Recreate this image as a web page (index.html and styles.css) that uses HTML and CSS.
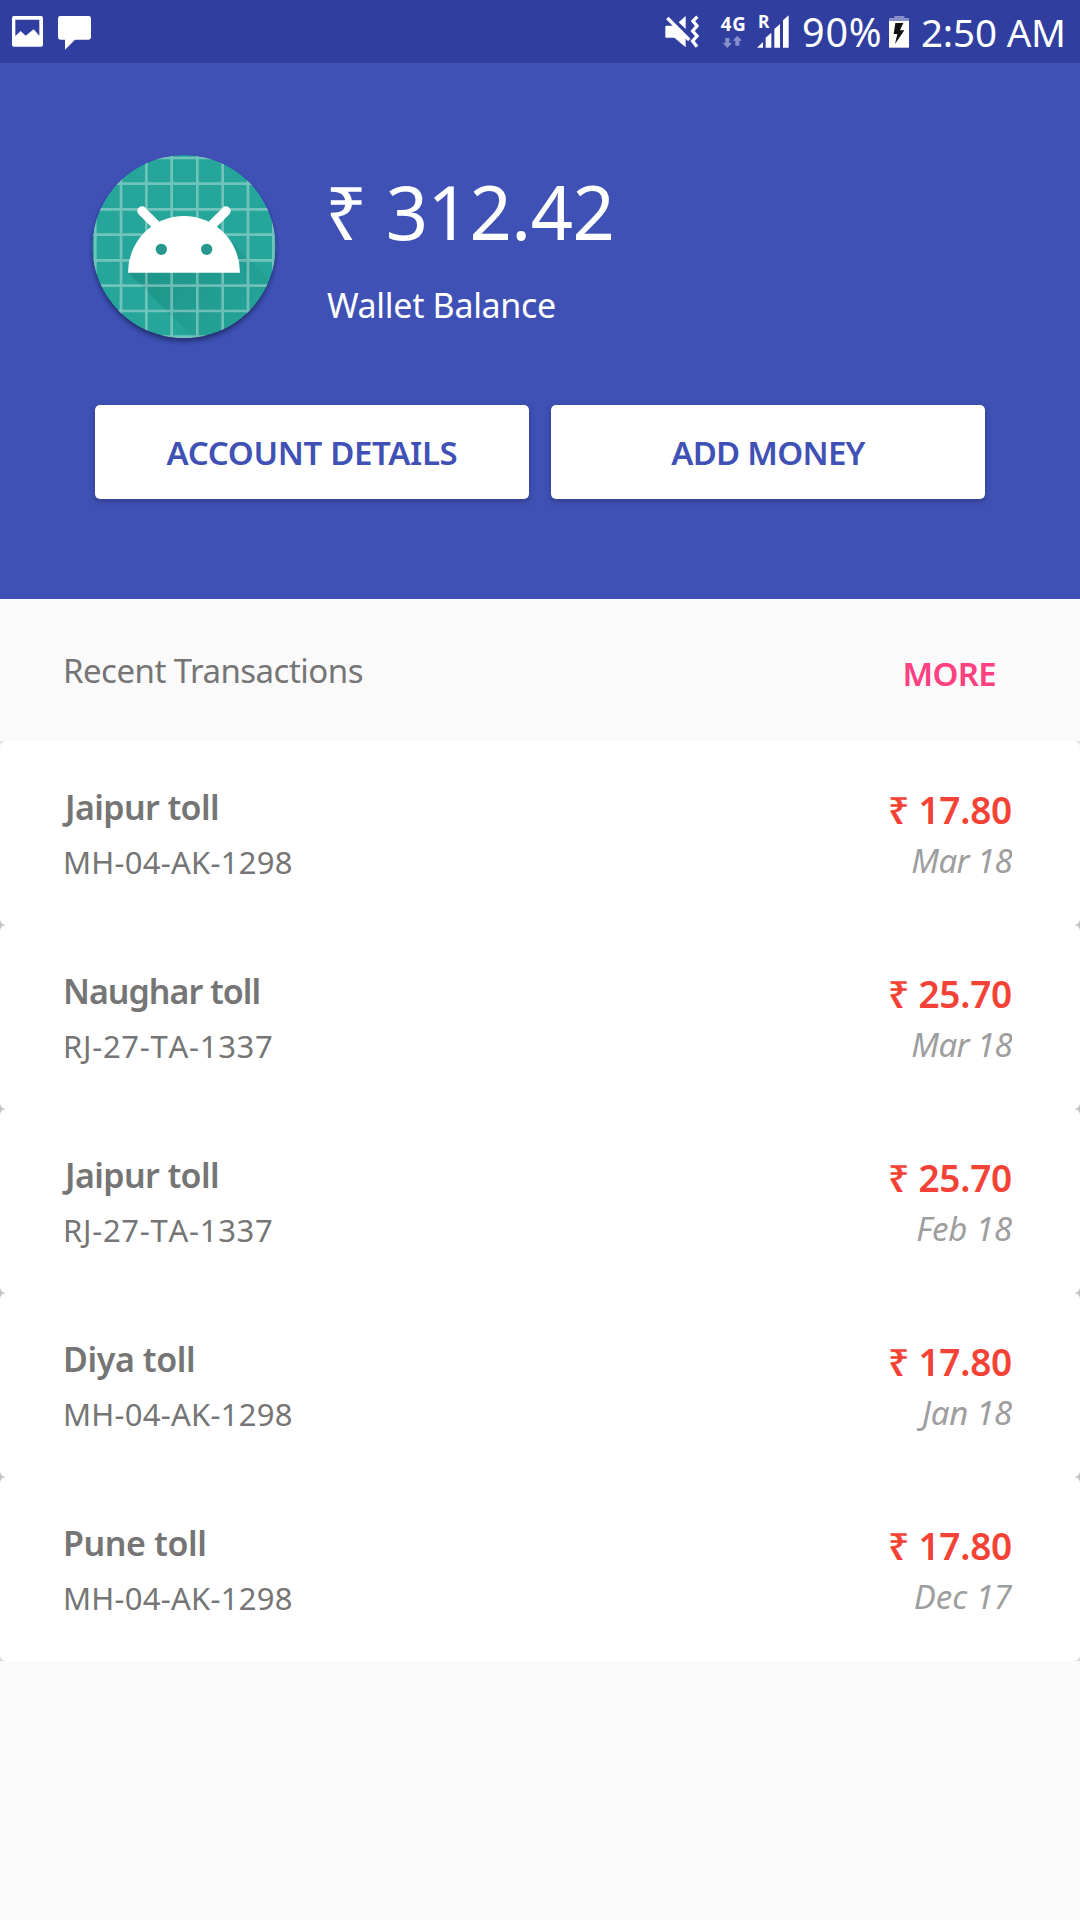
FILE: index.html
```html
<!DOCTYPE html>
<html lang="en">
<head>
<meta charset="utf-8">
<title>Wallet</title>
<link rel="stylesheet" href="styles.css">
</head>
<body>
<header class="status">
  <svg class="status-left" viewBox="0 0 300 189" aria-hidden="true">
    <path fill="#fff" fill-rule="evenodd" d="M42 48H123Q129 48 129 54V134Q129 140 123 140H42Q36 140 36 134V54Q36 48 42 48ZM46 59V108L62 93L77 107L101 88L118 107V59Z"/>
    <path fill="#fff" d="M181 48H266Q273 48 273 55V112Q273 119 266 119H225L195 149V119H181Q174 119 174 112V55Q174 48 181 48Z"/>
  </svg>
  <div class="status-right">
    <svg class="status-signal" viewBox="60 0 405 189">
      <g fill="#fff">
        <path d="M79 77H101L137 113V142L103 113H79Q76 113 76 110V80Q76 77 79 77Z"/>
        <path d="M116 67L137 48V87Z"/>
        <path d="M82 54L148 120" fill="none" stroke="#fff" stroke-width="10"/>
        <path d="M172 50L159 63L171 78L158 93L171 108L158 123L171 140" fill="none" stroke="#fff" stroke-width="10"/>
        <path d="M351 143L369 126V143ZM377 143V113L394 98V143ZM403 143V87L420 72V143ZM429 143V61L446 46V143Z"/>
      </g>
      <g fill="#8890cb">
        <path d="M256 114H268V129H276L262 144L248 129H256Z"/>
        <path d="M286 137V122H278L292 107L306 122H298V137Z"/>
      </g>
      <text class="net" x="242" y="94" textLength="75">4G</text>
      <text class="roam" x="354" y="85">R</text>
    </svg>
    <span class="percent">90%</span>
    <svg class="battery" viewBox="327 0 60 189" aria-hidden="true">
      <path fill="#8890cb" d="M343 48H373V54H387V63H327V54H343Z"/>
      <path fill="#fff" d="M327 63H387V143H327Z"/>
      <path fill="#111" d="M346 69H370L360 91H373L345 132L352 102H341Z"/>
    </svg>
    <span class="clock">2:50 AM</span>
  </div>
</header>

<section class="hero">
  <div class="wallet">
    <svg class="logo" viewBox="0 0 630 630" aria-hidden="true">
      <defs>
        <clipPath id="disc"><circle cx="312" cy="320" r="275"/></clipPath>
        <linearGradient id="shade" gradientUnits="userSpaceOnUse" x1="250" y1="330" x2="480" y2="590">
          <stop offset="0" stop-color="#00574b" stop-opacity=".22"/>
          <stop offset="1" stop-color="#00574b" stop-opacity=".03"/>
        </linearGradient>
        <filter id="soft" x="-10%" y="-10%" width="120%" height="120%"><feGaussianBlur stdDeviation="6"/></filter>
      </defs>
      <circle cx="312" cy="330" r="275" fill="#1d2560" fill-opacity=".75" filter="url(#soft)"/>
      <g clip-path="url(#disc)">
        <circle cx="312" cy="320" r="275" fill="#26a69a"/>
        <path fill="url(#shade)" d="M145 398L400 655H700V560L413 261Z"/>
        <path fill="none" stroke="#fff" stroke-opacity=".34" stroke-width="8" d="M46 0V630M123 0V630M199 0V630M275 0V630M352 0V630M428 0V630M504 0V630M580 0V630M0 54H630M0 131H630M0 208H630M0 284H630M0 361H630M0 437H630M0 513H630M0 590H630"/>
      </g>
      <path fill="#fff" d="M144 398A168 170 0 0 1 480 398Z"/>
      <path fill="none" stroke="#fff" stroke-width="28" stroke-linecap="round" d="M186 213L235 262M438 213L389 262"/>
      <circle cx="244" cy="328" r="17" fill="#26998e"/>
      <circle cx="380" cy="328" r="17" fill="#26998e"/>
    </svg>
    <div class="balance">
      <div class="amount">₹ 312.42</div>
      <div class="caption">Wallet Balance</div>
    </div>
  </div>
  <div class="actions">
    <button class="btn">ACCOUNT DETAILS</button>
    <button class="btn btn-add">ADD MONEY</button>
  </div>
</section>

<main>
  <div class="heading">
    <h2 class="title">Recent Transactions</h2>
    <a class="more">MORE</a>
  </div>
  <ul class="list">
    <li class="card">
      <div class="info"><div class="name name-j">Jaipur toll</div><div class="plate">MH-04-AK-1298</div></div>
      <div class="cost"><div class="price">₹ 17.80</div><div class="date">Mar 18</div></div>
    </li>
    <li class="card">
      <div class="info"><div class="name name-n">Naughar toll</div><div class="plate plate-rj">RJ-27-TA-1337</div></div>
      <div class="cost"><div class="price">₹ 25.70</div><div class="date">Mar 18</div></div>
    </li>
    <li class="card">
      <div class="info"><div class="name name-j">Jaipur toll</div><div class="plate plate-rj">RJ-27-TA-1337</div></div>
      <div class="cost"><div class="price">₹ 25.70</div><div class="date date-feb">Feb 18</div></div>
    </li>
    <li class="card">
      <div class="info"><div class="name">Diya toll</div><div class="plate">MH-04-AK-1298</div></div>
      <div class="cost"><div class="price">₹ 17.80</div><div class="date date-jan">Jan 18</div></div>
    </li>
    <li class="card">
      <div class="info"><div class="name">Pune toll</div><div class="plate">MH-04-AK-1298</div></div>
      <div class="cost"><div class="price">₹ 17.80</div><div class="date date-dec">Dec 17</div></div>
    </li>
  </ul>
</main>
</body>
</html>
```
FILE: styles.css
```css
* { box-sizing: border-box; }

body {
  margin: 0;
  min-height: 1920px;
  background: #fafafa;
  font-family: "Noto Sans", "Open Sans", sans-serif;
  color: #757575;
}

svg { display: block; flex: none; }

/* Status bar */
.status {
  display: flex;
  justify-content: space-between;
  height: 63px;
  background: #303f9f;
  color: #fff;
  font-size: 38.5px;
  line-height: 65px;
  white-space: nowrap;
}
.status-left { width: 100px; height: 63px; }
.status-right { display: flex; width: 420px; }
.status-signal { width: 135px; height: 63px; }
.net, .roam { font-weight: 700; fill: #fff; }
.net { font-size: 56px; }
.roam { font-size: 52px; }
.percent { width: 94px; padding-left: 7px; font-size: 39.5px; letter-spacing: .8px; }
.battery { width: 20px; height: 63px; }
.clock { padding-left: 12px; letter-spacing: -.15px; }

/* Wallet summary */
.hero {
  height: 536px;
  padding: 77px 95px 0;
  background: #3f51b5;
  color: #fff;
}
.wallet { display: flex; gap: 35px; height: 265px; margin-left: -15px; }
.logo { width: 210px; height: 210px; }
.balance { padding-top: 22px; white-space: nowrap; }
.amount { height: 100px; font-size: 74px; line-height: 100px; letter-spacing: -.45px; }
.caption { padding-left: 2px; font-size: 34px; line-height: 87px; letter-spacing: -.32px; }
.actions { display: flex; gap: 22px; }
.btn {
  flex: 1;
  height: 94px;
  padding: 1px 0 0;
  border: 0;
  border-radius: 5px;
  background: #fff;
  box-shadow: 0 2px 6px rgba(0, 0, 0, .28);
  color: #3f51b5;
  font: 600 33px/93px "Noto Sans", "Open Sans", sans-serif;
  letter-spacing: -.35px;
}
.btn-add { letter-spacing: -.75px; }

/* Transactions */
.heading {
  display: flex;
  justify-content: space-between;
  height: 142px;
  padding: 0 84px 0 63px;
}
.title { margin: 0; font-size: 33px; font-weight: 400; line-height: 144px; letter-spacing: -.52px; }
.more { color: #ff4081; font-size: 33px; font-weight: 600; line-height: 150px; letter-spacing: -.7px; }
.list {
  margin: 0;
  padding: 0;
  list-style: none;
  background: linear-gradient(#e2e2e2 10px, #c4c4c4 20px, #c4c4c4 900px, #d8d8d8 910px);
}
.card {
  display: flex;
  justify-content: space-between;
  height: 184px;
  padding: 42px 68px 0 62px;
  border-radius: 6px;
  background: #fff;
  white-space: nowrap;
}
.name { height: 54px; padding-left: 1px; font-size: 34px; font-weight: 600; line-height: 49px; letter-spacing: -.4px; }
.name-j { padding-left: 3px; letter-spacing: -.6px; }
.name-n { letter-spacing: -1px; }
.plate { padding-left: 1px; font-size: 31px; line-height: 51px; letter-spacing: .25px; font-kerning: none; }
.plate-rj { letter-spacing: .72px; }
.cost { text-align: right; }
.price { height: 50px; color: #f44336; font-size: 37px; font-weight: 600; line-height: 54px; letter-spacing: -.25px; }
.date { overflow: hidden; color: #9e9e9e; font-size: 33px; font-style: italic; line-height: 56px; letter-spacing: -.65px; }
.date-feb { letter-spacing: -.1px; }
.date-jan { letter-spacing: -.3px; }
.date-dec { letter-spacing: -.04px; }
```
